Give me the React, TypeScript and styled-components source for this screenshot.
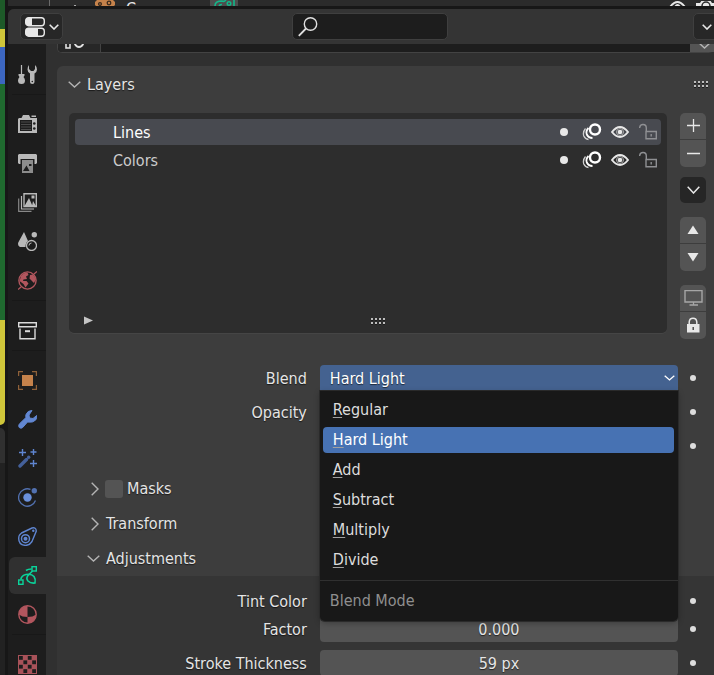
import React, { useState } from "react";
import styled, { createGlobalStyle, css } from "styled-components";

const GlobalStyle = createGlobalStyle`
  * { box-sizing: border-box; }
  html, body { margin: 0; background: #171717; }
  body, button, input {
    font-family: "DejaVu Sans Condensed", "DejaVu Sans", sans-serif;
    font-size: 16px;
    color: #e5e5e5;
  }
  button, input { margin: 0; padding: 0; border: 0; }
  svg { display: block; flex: none; }
`;

/* ---------- Window frame ---------- */

const Screen = styled.div`
  display: grid;
  grid-template-columns: 5px minmax(0, 1fr);
  column-gap: 3px;
  height: 100vh;
  overflow: hidden;
  background: #171717;
`;

const Neighbours = styled.div`
  display: flex;
  flex-direction: column;
`;

const Canvas = styled.div`
  height: 425px;
  border-radius: 0 0 5px 0;
  background: linear-gradient(
    #1d5a28 29px, #cfc63a 29px 47px, #3c66c0 47px 84px,
    #1f6a2f 84px 320px, #cfc63a 320px
  );
`;

const TimelineHeader = styled.div`
  height: 35px;
  margin-top: 3px;
  border-radius: 0 5px 0 0;
  background: #303030;
`;

const TimelineBody = styled.div`
  flex: 1;
  background: #222222;
`;

const Column = styled.div`
  display: flex;
  flex-direction: column;
  min-width: 0;
  height: 100vh;
`;

const Outliner = styled.div`
  display: flex;
  align-items: flex-start;
  flex: none;
  height: 6px;
  margin-bottom: 3px;
  padding: 0 0 0 41px;
  overflow: hidden;
  background: #2b2b2b;
`;

const TreeLine = styled.span`
  width: 1px;
  height: 6px;
  margin-right: 21px;
  background: #6a6a6a;
`;

const OutlinerName = styled.span`
  width: 82px;
  margin: 1px 0 0 11px;
  line-height: 16px;
`;

const OutlinerData = styled.span`
  display: flex;
  justify-content: center;
  width: 28px;
  margin-left: 2px;
  height: 6px;
  background: #4d4d4d;
`;

const OutlinerToggles = styled.span`
  display: flex;
  gap: 10px;
  margin: 1px -2px 0 auto;
`;

const Editor = styled.main`
  display: flex;
  flex-direction: column;
  flex: 1;
  min-height: 0;
  overflow: hidden;
  border-radius: 6px 0 0 0;
  background: #303030;
`;

/* ---------- Header ---------- */

const Header = styled.header`
  display: grid;
  grid-template-columns: 1fr 156px 1fr;
  align-items: center;
  flex: none;
  height: 35px;
  margin-right: -7px;
  padding: 0 1px 0 12px;
  background: #343434;
`;

const DarkButton = styled.button<{ $width: number; $end?: boolean }>`
  display: flex;
  align-items: center;
  justify-content: center;
  gap: 4px;
  width: ${(p) => p.$width}px;
  height: 27px;
  justify-self: ${(p) => (p.$end ? "end" : "start")};
  border: 1px solid #3f3f3f;
  border-radius: 5px;
  background: #272727;
`;

const Search = styled.label`
  display: flex;
  align-items: center;
  height: 27px;
  padding-left: 5px;
  border: 1px solid #3f3f3f;
  border-radius: 5px;
  background: #1d1d1d;
`;

const SearchInput = styled.input`
  flex: 1;
  min-width: 0;
  padding: 0 4px;
  background: transparent;
  outline: none;
`;

/* ---------- Tabs ---------- */

const Body = styled.div`
  display: flex;
  flex: 1;
  min-height: 0;
`;

const Tabs = styled.nav`
  flex: none;
  width: 38px;
  padding: 12px 0 0 1px;
  overflow: hidden;
  background: #1d1d1d;
`;

const TabGroup = styled.div`
  display: flex;
  flex-direction: column;
  gap: 2px;

  & + & {
    margin: 1px 0 0 3px;
    padding-top: 11px;
    border-top: 1px solid #181818;
  }
`;

const Tab = styled.button<{ $active?: boolean; $inset?: boolean }>`
  display: flex;
  align-items: center;
  height: 37px;
  margin-left: ${(p) => (p.$inset ? -3 : 0)}px;
  padding-left: 9px;
  border-radius: 6px 0 0 6px;
  background: ${(p) => (p.$active ? "#303030" : "transparent")};
`;

/* ---------- Properties region ---------- */

const Region = styled.div`
  flex: 1;
  min-width: 0;
  padding-left: 11px;
  overflow: hidden;
`;

const DataBlock = styled.div`
  display: flex;
  height: 27px;
  margin: -18px 0 13px 0;
  border: 1px solid #434343;
  border-right: 0;
  border-radius: 5px;
  background: #1d1d1d;
`;

const DataBlockType = styled.button`
  display: flex;
  align-items: flex-end;
  justify-content: center;
  width: 43px;
  padding: 0 10px 3px 0;
  border-right: 1px solid #434343;
  border-radius: 4px 0 0 4px;
  background: #272727;
`;

const DataBlockName = styled.div`
  flex: 1;
`;

const DataBlockMenu = styled.button`
  display: flex;
  align-items: center;
  width: 24px;
  padding: 11px 0 0 8px;
  background: #545454;
`;

const Panel = styled.section`
  height: 100%;
  border-radius: 6px 0 0 0;
  background: #3d3d3d;
`;

const shadow = css`
  text-shadow: 0 1px 1px rgba(0, 0, 0, 0.6);
`;

const PanelHeader = styled.div`
  display: flex;
  align-items: center;
  justify-content: space-between;
  height: 36px;
  padding: 0 4px 0 11px;
`;

const Disclosure = styled.button<{ $gap: number }>`
  display: flex;
  align-items: center;
  gap: ${(p) => p.$gap}px;
  background: transparent;
  ${shadow}
`;

const LayerArea = styled.div`
  display: flex;
  gap: 13px;
  margin: 11px 8px 0 12px;
`;

const LayerList = styled.div`
  display: flex;
  flex-direction: column;
  gap: 2px;
  flex: 1;
  min-width: 0;
  height: 220px;
  padding: 6px;
  border-radius: 5px;
  background: #2d2d2d;
  box-shadow: 0 1px 0 #454545;
`;

const LayerRow = styled.div<{ $active?: boolean }>`
  display: flex;
  align-items: center;
  height: 26px;
  padding: 0 3px 0 38px;
  border-radius: 4px;
  background: ${(p) => (p.$active ? "#484a50" : "transparent")};
`;

const LayerName = styled.span<{ $active?: boolean }>`
  flex: 1;
  color: ${(p) => (p.$active ? "#ffffff" : "#cccccc")};
`;

const LayerToggles = styled.span`
  display: flex;
  align-items: center;
  gap: 9px;
`;

const DotHolder = styled.span`
  margin-right: 5px;
`;

const IconButton = styled.button`
  display: flex;
  background: transparent;
`;

const ListFooter = styled.div`
  display: flex;
  align-items: center;
  justify-content: center;
  height: 12px;
  margin-top: auto;
  padding-left: 9px;
`;

const ListGrip = styled.span`
  margin: 0 auto;
`;

const SideButtons = styled.div`
  display: flex;
  flex-direction: column;
  width: 26px;
`;

const ButtonStack = styled.div<{ $space?: number }>`
  display: flex;
  flex-direction: column;
  gap: 1px;
  margin-bottom: ${(p) => p.$space ?? 0}px;
  overflow: hidden;
  border-radius: 5px;
`;

const SideButton = styled.button<{ $dark?: boolean }>`
  display: flex;
  align-items: center;
  justify-content: center;
  height: ${(p) => (p.$dark ? 26 : 27)}px;
  padding-bottom: 1px;
  background: ${(p) => (p.$dark ? "#262626" : "#545454")};

  &:first-child { height: 26px; }
`;

/* ---------- Property rows ---------- */

const Properties = styled.div<{ $top: number }>`
  padding-top: ${(p) => p.$top}px;
`;

const Row = styled.div<{ $space: number }>`
  display: grid;
  grid-template-columns: 2fr 3fr 36px;
  align-items: center;
  height: 26px;
  margin-bottom: ${(p) => p.$space}px;
  padding-left: 24px;
`;

const Label = styled.label`
  grid-column: 1;
  padding-right: 13px;
  text-align: right;
  white-space: nowrap;
  ${shadow}
`;

const ValueInput = styled.input`
  grid-column: 2;
  width: 100%;
  height: 26px;
  border-radius: 4px;
  background: #545454;
  text-align: center;
  outline: none;
  ${shadow}
`;

const ColorInput = styled.input`
  grid-column: 2;
  width: 100%;
  height: 26px;
  background: #545454;
`;

const LightsBox = styled.input`
  grid-column: 2;
  width: 18px;
  height: 18px;
  appearance: none;
  border-radius: 3px;
  background: #545454;
`;

const KeyDot = styled.button`
  grid-column: 3;
  width: 6px;
  height: 6px;
  margin-left: 12px;
  border-radius: 50%;
  background: #dddddd;
`;

const Dropdown = styled.div`
  grid-column: 2;
  position: relative;
`;

const DropdownButton = styled.button`
  display: flex;
  align-items: center;
  justify-content: space-between;
  width: 100%;
  height: 26px;
  padding: 0 3px 0 10px;
  border-radius: 4px 4px 0 0;
  background: #446290;
  color: #ffffff;
  ${shadow}
`;

const Menu = styled.div`
  position: absolute;
  z-index: 2;
  top: 26px;
  left: 0;
  right: 0;
  border-radius: 0 0 5px 5px;
  background: #181818;
  box-shadow: 0 0 0 1px #2a2a2a, 0 2px 6px rgba(0, 0, 0, 0.3);
`;

const Options = styled.ul`
  display: flex;
  flex-direction: column;
  gap: 4px;
  margin: 0;
  padding: 6px 4px 7px 3px;
  list-style: none;
`;

const Option = styled.li<{ $active: boolean }>`
  height: 26px;
  padding-left: 10px;
  border-radius: 4px;
  line-height: 26px;
  background: ${(p) => (p.$active ? "#4772b3" : "transparent")};
  color: ${(p) => (p.$active ? "#ffffff" : "#dddddd")};
  cursor: default;

  &::first-letter {
    text-decoration: underline;
    text-decoration-color: #a0a0a0;
    text-underline-offset: 2px;
  }
`;

const MenuTitle = styled.div`
  height: 41px;
  padding-left: 10px;
  border-top: 1px solid #303030;
  line-height: 39px;
  color: #8f8f8f;
`;

const SubPanelHeader = styled.div<{ $open?: boolean }>`
  display: flex;
  align-items: center;
  gap: 6px;
  height: 35px;
  padding-left: ${(p) => (p.$open ? 30 : 34)}px;
`;

const SubPanels = styled.div`
  padding-top: 12px;
`;

const MaskLabel = styled.label`
  display: flex;
  align-items: center;
  gap: 4px;
  ${shadow}
`;

const MaskBox = styled.input`
  width: 18px;
  height: 18px;
  margin: 0;
  appearance: none;
  border-radius: 3px;
  background: #545454;
`;

const SubPanelBody = styled.div`
  height: 140px;
  padding-top: 12px;
  background: #353535;
`;

/* ---------- Icons ---------- */

type IconProps = { size?: number; children: React.ReactNode; color?: string };

const Icon = ({ size = 19, color = "#b9b9b9", children }: IconProps) => (
  <svg width={size} height={size} viewBox={`0 0 ${size} ${size}`} fill="none" stroke={color} color={color} aria-hidden="true">
    {children}
  </svg>
);

const F = "currentColor";

const Chevron = ({ w = 13, h = 7, color = "#b4b4b4", line = 1.4 }) => (
  <svg width={w} height={h} viewBox={`0 0 ${w} ${h}`} fill="none" stroke={color} strokeWidth={line} aria-hidden="true">
    <path d={`M.7 .7 L${w / 2} ${h - 1} L${w - 0.7} .7`} />
  </svg>
);

const ChevronRight = () => (
  <svg width="8" height="14" viewBox="0 0 8 14" fill="none" stroke="#b4b4b4" strokeWidth="1.4" aria-hidden="true">
    <path d="M.7 .8 L7 7 L.7 13.2" />
  </svg>
);

const Grip = ({ pitch = 4 }) => (
  <svg width="16" height="7" viewBox="0 0 16 7" aria-hidden="true">
    {[0, 1, 2, 3].map((i) => (
      <g key={i}>
        <rect x={i * pitch} y="0" width="2" height="2" fill="#bdbdbd" />
        <rect x={i * pitch} y="2" width="2" height="1" fill="#1c1c1c" />
        <rect x={i * pitch} y="4" width="2" height="2" fill="#bdbdbd" />
        <rect x={i * pitch} y="6" width="2" height="1" fill="#1c1c1c" />
      </g>
    ))}
  </svg>
);

const EditorIcon = () => (
  <svg width="20" height="20" viewBox="0 0 20 20" fill="none" aria-hidden="true">
    <rect x=".7" y=".7" width="18.6" height="8" rx="3" stroke="#e8e8e8" strokeWidth="1.4" />
    <path d="M3.5 .7H7v8H3.5Q.7 8.7 .7 6V3.5Q.7 .7 3.5 .7Z" fill="#e8e8e8" />
    <rect x=".7" y="11.2" width="18.6" height="8" rx="3" stroke="#e8e8e8" strokeWidth="1.4" />
    <path d="M3.5 11.2H13v8H3.5Q.7 19.2 .7 16.5V14Q.7 11.2 3.5 11.2Z" fill="#e8e8e8" />
  </svg>
);

const SearchIcon = () => (
  <Icon size={20} color="#e0e0e0">
    <circle cx="12.5" cy="7" r="6.2" strokeWidth="1.4" />
    <path d="M8 11.5 L.8 18.8" strokeWidth="1.8" />
  </Icon>
);

const ToolIcon = () => (
  <Icon>
    <path d="M3.5 0V9" strokeWidth="1.2" />
    <path d="M.5 9H6.5V10.5L5.5 12Q7 13.5 7 15.5Q7 19 3.5 19Q0 19 0 15.5Q0 13.5 1.5 12L.5 10.5Z" fill={F} stroke="none" />
    <path d="M11 0V4L13 6H15.5L17 4V0Q19 1.5 19 4.5Q19 7 16.5 8.5V17Q16.5 19 14.3 19Q12 19 12 17V8.5Q9.5 7 9.5 4.5Q9.5 1.5 11 0Z" fill={F} stroke="none" />
    <circle cx="14.3" cy="16.5" r=".8" fill="#1d1d1d" stroke="none" />
  </Icon>
);

const RenderIcon = () => (
  <Icon>
    <path d="M1 3H3.5L5 0H11L12.5 3H19V18H0V4ZM13.5 .5H18V2H13.5Z" fill={F} stroke="none" />
    <rect x="2" y="5" width="12" height="11" fill="#1d1d1d" stroke="none" />
    <path d="M3 7H13M3 9.5H13M3 12H13M3 14.5H13" stroke="#4a4a4a" strokeWidth="1" />
    <circle cx="16.3" cy="8.5" r="1.3" fill="#1d1d1d" stroke="none" />
    <circle cx="16.3" cy="13.5" r="1.3" fill="#1d1d1d" stroke="none" />
  </Icon>
);

const OutputIcon = () => (
  <Icon>
    <path d="M1 0H18L19 1V9L18 10H16.5V5H2.5V10H1L0 9V1Z" fill={F} stroke="none" />
    <path d="M4 6H15V19H4Z" fill="#8c8c8c" stroke="none" />
    <path d="M5 17L8.5 11.5L11.5 17ZM11 10H13.5V12H11Z" fill="#1d1d1d" stroke="none" />
  </Icon>
);

const ViewLayerIcon = () => (
  <Icon>
    <path d="M6 .7H18.3V13.5H6Z" strokeWidth="1.4" />
    <path d="M6.5 13L11 5L14.500 13ZM13.500 2.500H16.500V5.500H13.500ZM15 8L18 13H14Z" fill={F} stroke="none" />
    <path d="M3.5 3V16H16" strokeWidth="1.2" />
    <path d="M.7 5.5V18.4H13.5" stroke="#888" strokeWidth="1.2" />
  </Icon>
);

const SceneIcon = () => (
  <Icon>
    <path d="M6 0L10 9Q7.500 10.500 7.500 15H2Q-1 13 .5 10Z" fill={F} stroke="none" />
    <circle cx="16.3" cy="2.8" r="2.7" fill={F} stroke="none" />
    <circle cx="13.5" cy="13.5" r="5" strokeWidth="1.3" />
    <path d="M11 13.5Q11 11 13.5 11" strokeWidth="1" />
  </Icon>
);

const WorldIcon = () => (
  <Icon color="#b2565e">
    <circle cx="9.5" cy="9.5" r="8.6" strokeWidth="1.4" />
    <path d="M0 18.5L3 16M16 3L19 .5" strokeWidth="1.3" />
    <path d="M3 5Q6 1 9.5 1.5L10.5 4L8 5.5L9 8L5.5 8.5L5 10L8.5 10L10.5 12.500L7.500 16.500L5.500 13L1.500 10ZM12 4L15 3.500L18 8L16 12L13.500 9.500L11.500 7.500Z" fill={F} stroke="none" />
  </Icon>
);

const CollectionIcon = () => (
  <Icon color="#dadada">
    <path d="M.7 1.7H18.3V5.8H.7Z" strokeWidth="1.4" />
    <path d="M2 7.5V17.8H17V7.5" strokeWidth="1.4" />
    <path d="M7 10.2H12" strokeWidth="2" />
  </Icon>
);

const ObjectIcon = () => (
  <Icon color="#c5824b">
    <rect x="4" y="4" width="11" height="11" fill={F} stroke="none" />
    <path d="M.6 5V.6H5M14 .6H18.4V5M18.4 14V18.4H14M5 18.4H.6V14" stroke="#8f6139" strokeWidth="1.2" />
  </Icon>
);

const ModifierIcon = () => (
  <Icon color="#6287d2">
    <path d="M14 .5Q9.5 .5 8 4.500Q7.500 6 8 7.500L1.300 14Q0 16 1.300 17.500Q3 19 4.700 17.500L9.500 12Q15 13 17.700 10Q19 8 18.700 5.500L15 8.500L11.500 8L11 5Z" fill={F} strokeWidth="1" strokeLinejoin="round" />
  </Icon>
);

const EffectsIcon = () => (
  <Icon color="#5f85d0">
    <path d="M4.5 0V7M1 3.5H8M15.5 0V6M12.5 3H18.5M15.5 11V18M12 14.5H19" strokeWidth="1.4" />
    <path d="M2 17L8.5 10.5" stroke="#44609a" strokeWidth="3.4" strokeLinecap="round" />
    <circle cx="10.7" cy="8.3" r="1.7" fill="#44609a" stroke="none" />
  </Icon>
);

const ParticlesIcon = () => (
  <Icon color="#6a90dc">
    <circle cx="9.5" cy="9.5" r="4.2" fill={F} stroke="none" />
    <path d="M12.5 1.4A8.7 8.7 0 1 0 17.5 12.5" stroke="#5271b0" strokeWidth="1.3" />
    <circle cx="16.3" cy="2.7" r="2.7" fill="#5271b0" stroke="none" />
  </Icon>
);

const PhysicsIcon = () => (
  <Icon color="#5f85d0">
    <circle cx="7.5" cy="11.7" r="4" strokeWidth="1.5" />
    <circle cx="7.5" cy="11.7" r="2" fill={F} stroke="none" />
    <path d="M3.5 6L14 1Q18 0 18.3 4L14 14.5Q11.5 18.4 7.5 18.4Q.7 18 .7 11.5Q.7 8 3.5 6Z" strokeWidth="1.4" />
    <circle cx="15.3" cy="3.7" r="1.2" fill={F} stroke="none" />
  </Icon>
);

const DataIcon = () => (
  <Icon color="#0ad49b">
    <rect x="14" y=".7" width="4.3" height="4.3" strokeWidth="1.4" />
    <rect x=".7" y="14" width="4.3" height="4.3" strokeWidth="1.4" />
    <path d="M13.5 3Q10 3 8 4.5M2.800 13.500Q3.500 9.500 8 8.500Q13.500 7.500 16 10.500Q18 13.500 17 17Q12.500 17.500 10 15Q7.500 12 10.500 9Q13 6.500 14.500 5" strokeWidth="1.6" />
  </Icon>
);

const MaterialIcon = () => (
  <Icon color="#b2565e">
    <circle cx="9.5" cy="9.5" r="8.7" strokeWidth="1.4" />
    <path d="M9.5 .8A8.7 8.7 0 0 0 .8 9.5Q4 12 9.5 12ZM9.5 12Q15 12 18.2 9.5A8.7 8.7 0 0 1 9.5 18.2Z" fill={F} stroke="none" />
  </Icon>
);

const TextureIcon = () => (
  <Icon color="#a85259">
    <rect x="0" y="0" width="19" height="19" fill={F} stroke="none" />
    {[0, 1, 2, 3].map((r) =>
      [0, 1, 2, 3].map((c) =>
        (r + c) % 2 === 0 ? (
          <rect key={`${r}-${c}`} x={1 + c * 4.4} y={1 + r * 4.4} width="3.8" height="3.8" fill="#1d1d1d" stroke="none" />
        ) : null
      )
    )}
  </Icon>
);

const OnionIcon = () => (
  <Icon size={20} color="#ffffff">
    <path d="M3.500 6.500Q.500 10 1.800 14Q3.200 17 6.500 17.500" stroke="#d0d0d0" strokeWidth="1.300" />
    <path d="M6.500 6Q3.500 9 4.800 12.500Q6.500 16 10.500 16" strokeWidth="1.800" />
    <circle cx="13" cy="7.500" r="5" strokeWidth="2.400" />
  </Icon>
);

const EyeIcon = () => (
  <Icon size={18} color="#e8e8e8">
    <path d="M1 9Q9 -1 17 9Q9 19 1 9Z" strokeWidth="2" />
    <circle cx="9" cy="9" r="3.5" strokeWidth="1" stroke="#aaa" />
    <circle cx="9" cy="9" r="2.3" fill={F} stroke="none" />
  </Icon>
);

const UnlockIcon = () => (
  <Icon size={20} color="#8f9093">
    <path d="M1.7 6V5.5Q2 2.5 5 2.5Q8.3 2.5 8.3 6V10M8 9.5H18.3V16.8H8ZM13.2 12V14.5" strokeWidth="1.4" />
  </Icon>
);

const LockIcon = () => (
  <Icon size={16} color="#e8e8e8">
    <path d="M4.200 8V5Q4.500 1.200 8 1.200Q11.500 1.200 11.800 5V8" strokeWidth="1.500" />
    <path d="M2 7H14.500V15.500H2Z" fill={F} stroke="none" />
    <path d="M8.200 10V13" stroke="#444" strokeWidth="1.400" />
  </Icon>
);

const MonitorIcon = () => (
  <Icon size={19} color="#a6a6a6">
    <path d="M1 2.6H18V14H1Z" strokeWidth="1.4" />
    <path d="M9.5 14V16.5M5.5 17H14" strokeWidth="1.3" />
  </Icon>
);

const Triangle = ({ d, size = 12, color = "#e8e8e8" }: { d: string; size?: number; color?: string }) => (
  <svg width={size} height={size} viewBox="0 0 12 12" fill={color} aria-hidden="true">
    <path d={d} />
  </svg>
);

const Sign = ({ plus = false }) => (
  <Icon size={13} color="#e8e8e8">
    <path d={plus ? "M0 6.5H13M6.5 0V13" : "M0 6.5H13"} strokeWidth="1.3" />
  </Icon>
);

const LayerDot = () => (
  <Icon size={8} color="#e8e8e8">
    <circle cx="4" cy="4" r="4" fill={F} stroke="none" />
  </Icon>
);

const MeshObjectIcon = () => (
  <Icon size={20} color="#c5824b">
    <path d="M2 0H18L20 2V5L17 8H3L0 5V2Z" fill={F} stroke="none" />
    <circle cx="5" cy="4" r="1.4" stroke="#3a2a1c" strokeWidth="1.300" />
    <circle cx="14" cy="3" r="1.8" stroke="#3a2a1c" strokeWidth="1.300" />
  </Icon>
);

const CurveIcon = () => (
  <Icon size={24} color="#12b88a">
    <path d="M3 6Q3 1 10 1Q12 2 14 0M7 8Q7 4 10 4.500M22 0V7" strokeWidth="1.600" />
    <circle cx="17" cy="3.500" r="1.800" strokeWidth="1.400" />
  </Icon>
);

/* ---------- Data ---------- */

const TAB_GROUPS = [
  [["Tool", ToolIcon]],
  [
    ["Render", RenderIcon],
    ["Output", OutputIcon],
    ["View Layer", ViewLayerIcon],
    ["Scene", SceneIcon],
    ["World", WorldIcon],
  ],
  [["Collection", CollectionIcon]],
  [
    ["Object", ObjectIcon],
    ["Modifiers", ModifierIcon],
    ["Effects", EffectsIcon],
    ["Particles", ParticlesIcon],
    ["Constraints", PhysicsIcon],
    ["Data", DataIcon],
    ["Material", MaterialIcon],
  ],
  [["Texture", TextureIcon]],
] as [string, React.ComponentType][][];

const BLEND_MODES = ["Regular", "Hard Light", "Add", "Subtract", "Multiply", "Divide"];

export default function App() {
  const [tab, setTab] = useState("Data");
  const [layer, setLayer] = useState("Lines");
  const [blend, setBlend] = useState("Hard Light");
  const [open, setOpen] = useState(true);

  return (
    <>
      <GlobalStyle />
      <Screen>
        <Neighbours>
          <Canvas />
          <TimelineHeader />
          <TimelineBody />
        </Neighbours>
        <Column>
          <Outliner>
            <TreeLine />
            <svg width="8" height="6" viewBox="0 0 8 6" fill="none" stroke="#bbb" aria-hidden="true">
              <path d="M2.5 7L4 5L5.5 7" />
            </svg>
            <svg width="16" height="6" aria-hidden="true" />
            <MeshObjectIcon />
            <OutlinerName>C</OutlinerName>
            <OutlinerData>
              <CurveIcon />
            </OutlinerData>
            <OutlinerToggles>
              <svg width="17" height="6" viewBox="0 0 17 6" fill="none" stroke="#e8e8e8" strokeWidth="1.8" aria-hidden="true">
                <path d="M1 6Q8.5 -4 16 6" />
                <path d="M6 6Q8.5 2 11 6" />
              </svg>
              <svg width="20" height="6" viewBox="0 0 20 6" fill="#e8e8e8" aria-hidden="true">
                <path d="M0 2H4L6 -1H14L16 2H20V6H0Z" />
                <circle cx="10" cy="5" r="4" fill="none" stroke="#2b2b2b" strokeWidth="1.5" />
              </svg>
            </OutlinerToggles>
          </Outliner>

          <Editor>
            <Header>
              <DarkButton $width={43} aria-label="Editor type">
                <EditorIcon />
                <Chevron w={10} h={6} color="#e8e8e8" line={1.6} />
              </DarkButton>
              <Search>
                <SearchIcon />
                <SearchInput type="text" aria-label="Search" />
              </Search>
              <DarkButton $width={27} $end aria-label="Options">
                <Chevron w={10} h={6} color="#e8e8e8" line={1.6} />
              </DarkButton>
            </Header>

            <Body>
              <Tabs>
                {TAB_GROUPS.map((group, g) => (
                  <TabGroup key={g}>
                    {group.map(([name, Glyph]) => (
                      <Tab
                        key={name}
                        $inset={g > 0}
                        $active={tab === name}
                        aria-label={name}
                        onClick={() => setTab(name)}
                      >
                        <Glyph />
                      </Tab>
                    ))}
                  </TabGroup>
                ))}
              </Tabs>

              <Region>
                <DataBlock>
                  <DataBlockType aria-label="Data-block type">
                    <Icon size={19} color="#e0e0e0">
                      <rect x="1" y="12" width="4" height="6" strokeWidth="1.6" />
                      <path d="M9.500 13Q11 17 14 17Q17 17 18.500 13" strokeWidth="1.8" />
                    </Icon>
                  </DataBlockType>
                  <DataBlockName />
                  <DataBlockMenu aria-label="Data-block options">
                    <Chevron />
                  </DataBlockMenu>
                </DataBlock>

                <Panel>
                  <PanelHeader>
                    <Disclosure $gap={6}>
                      <Chevron />
                      Layers
                    </Disclosure>
                    <Grip />
                  </PanelHeader>

                  <LayerArea>
                    <LayerList>
                      {["Lines", "Colors"].map((name) => (
                        <LayerRow key={name} $active={layer === name} onClick={() => setLayer(name)}>
                          <LayerName $active={layer === name}>{name}</LayerName>
                          <LayerToggles>
                            <DotHolder><LayerDot /></DotHolder>
                            <IconButton aria-label="Onion skinning"><OnionIcon /></IconButton>
                            <IconButton aria-label="Visibility"><EyeIcon /></IconButton>
                            <IconButton aria-label="Lock layer"><UnlockIcon /></IconButton>
                          </LayerToggles>
                        </LayerRow>
                      ))}
                      <ListFooter>
                        <IconButton aria-label="Filter">
                          <Triangle d="M0 1.5L9 5.5L0 9.5Z" color="#c4c4c4" />
                        </IconButton>
                        <ListGrip><Grip /></ListGrip>
                      </ListFooter>
                    </LayerList>

                    <SideButtons>
                      <ButtonStack $space={10}>
                        <SideButton aria-label="Add layer"><Sign plus /></SideButton>
                        <SideButton aria-label="Remove layer"><Sign /></SideButton>
                      </ButtonStack>
                      <ButtonStack $space={14}>
                        <SideButton $dark aria-label="Layer specials">
                          <Chevron h={8} color="#e8e8e8" line={1.5} />
                        </SideButton>
                      </ButtonStack>
                      <ButtonStack $space={14}>
                        <SideButton aria-label="Move up"><Triangle d="M.5 10L6 1.5L11.5 10Z" /></SideButton>
                        <SideButton aria-label="Move down"><Triangle d="M.5 2L6 10.5L11.5 2Z" /></SideButton>
                      </ButtonStack>
                      <ButtonStack>
                        <SideButton aria-label="Isolate layer"><MonitorIcon /></SideButton>
                        <SideButton aria-label="Lock all"><LockIcon /></SideButton>
                      </ButtonStack>
                    </SideButtons>
                  </LayerArea>

                  <Properties $top={26}>
                    <Row $space={8}>
                      <Label id="blend-label" htmlFor="blend">Blend</Label>
                      <Dropdown>
                        <DropdownButton
                          id="blend"
                          aria-haspopup="listbox"
                          aria-expanded={open}
                          onClick={() => setOpen(!open)}
                        >
                          {blend}
                          <Chevron w={11} h={6} color="#ffffff" line={1.3} />
                        </DropdownButton>
                        {open && (
                          <Menu>
                            <Options role="listbox" aria-labelledby="blend-label">
                              {BLEND_MODES.map((mode) => (
                                <Option
                                  key={mode}
                                  role="option"
                                  aria-selected={mode === blend}
                                  $active={mode === blend}
                                  onClick={() => {
                                    setBlend(mode);
                                    setOpen(false);
                                  }}
                                >
                                  {mode}
                                </Option>
                              ))}
                            </Options>
                            <MenuTitle>Blend Mode</MenuTitle>
                          </Menu>
                        )}
                      </Dropdown>
                      <KeyDot aria-label="Animate blend" />
                    </Row>
                    <Row $space={8}>
                      <Label htmlFor="opacity">Opacity</Label>
                      <ValueInput id="opacity" type="text" />
                      <KeyDot aria-label="Animate opacity" />
                    </Row>
                    <Row $space={0}>
                      <LightsBox type="checkbox" aria-label="Lights" />
                      <KeyDot aria-label="Animate lights" />
                    </Row>
                  </Properties>

                  <SubPanels>
                    <SubPanelHeader>
                      <Disclosure $gap={0} aria-label="Expand masks"><ChevronRight /></Disclosure>
                      <MaskLabel>
                        <MaskBox type="checkbox" />
                        Masks
                      </MaskLabel>
                    </SubPanelHeader>
                    <SubPanelHeader>
                      <Disclosure $gap={7}>
                        <ChevronRight />
                        Transform
                      </Disclosure>
                    </SubPanelHeader>
                    <SubPanelHeader $open>
                      <Disclosure $gap={6}>
                        <Chevron />
                        Adjustments
                      </Disclosure>
                    </SubPanelHeader>
                    <SubPanelBody>
                      <Row $space={2}>
                        <Label htmlFor="tint">Tint Color</Label>
                        <ColorInput id="tint" type="color" />
                        <KeyDot aria-label="Animate tint color" />
                      </Row>
                      <Row $space={8}>
                        <Label htmlFor="factor">Factor</Label>
                        <ValueInput id="factor" type="text" defaultValue="0.000" />
                        <KeyDot aria-label="Animate factor" />
                      </Row>
                      <Row $space={8}>
                        <Label htmlFor="thickness">Stroke Thickness</Label>
                        <ValueInput id="thickness" type="text" defaultValue="59 px" />
                        <KeyDot aria-label="Animate stroke thickness" />
                      </Row>
                    </SubPanelBody>
                  </SubPanels>
                </Panel>
              </Region>
            </Body>
          </Editor>
        </Column>
      </Screen>
    </>
  );
}
